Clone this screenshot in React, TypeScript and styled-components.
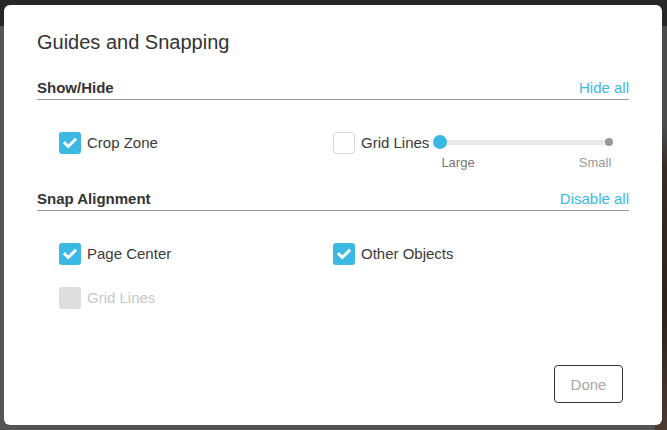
import styled, { createGlobalStyle } from "styled-components";

const GlobalStyle = createGlobalStyle`
  html, body {
    margin: 0;
    padding: 0;
    width: 100%;
    height: 100%;
    overflow: hidden;
    font-family: "Liberation Sans", Arial, sans-serif;
  }
`;

const ACCENT = "#3cb9e2";

const Page = styled.div`
  display: flex;
  flex-direction: column;
  width: 100vw;
  height: 100vh;
  background: #4f4f4f;
`;

const TopBar = styled.div`
  height: 26px;
  background: #262626;
`;

const Workspace = styled.div`
  flex: 1;
  display: flex;
`;

const Panel = styled.div`
  flex: 1;
  background: #545454;
`;

const Canvas = styled.div`
  width: 12px;
  background: linear-gradient(180deg, #4b4b4b 0%, #4b4b4b 25%, #3a2b24 35%, #2e201b 70%, #4a3a30 100%);
`;

const Overlay = styled.div`
  position: fixed;
  inset: 0;
  padding: 5px 5px 5px 4px;
  display: flex;
  align-items: flex-start;
`;

const Dialog = styled.div`
  box-sizing: border-box;
  width: 658px;
  height: 420px;
  padding: 25px 33px 22px;
  background: #fff;
  border-radius: 6px;
  display: flex;
  flex-direction: column;
  color: #333;
`;

const Title = styled.h2`
  margin: 0;
  font-size: 20px;
  line-height: 24px;
  font-weight: 400;
  color: #333;
`;

const SectionHeader = styled.div<{ $top: number }>`
  display: flex;
  justify-content: space-between;
  align-items: center;
  margin-top: ${(p) => p.$top}px;
  padding-bottom: 2px;
  border-bottom: 1px solid #999;
  line-height: 18px;
`;

const SectionTitle = styled.span`
  font-size: 15px;
  font-weight: 700;
  color: #333;
`;

const LinkButton = styled.button`
  border: 0;
  padding: 0;
  background: none;
  font: inherit;
  font-size: 15px;
  color: ${ACCENT};
  cursor: pointer;
`;

const OptionGrid = styled.div`
  display: grid;
  grid-template-columns: 274px 1fr;
  row-gap: 22px;
  margin-top: 32px;
  padding-left: 22px;
  align-items: start;
`;

const Option = styled.label<{ $disabled?: boolean }>`
  display: flex;
  align-items: flex-start;
  font-size: 15px;
  line-height: 22px;
  color: ${(p) => (p.$disabled ? "#c8c8c8" : "#3a3a3a")};
`;

const Box = styled.span<{ $checked?: boolean; $disabled?: boolean }>`
  box-sizing: border-box;
  flex: none;
  width: 22px;
  height: 22px;
  margin-right: 6px;
  border-radius: 3px;
  display: flex;
  align-items: center;
  justify-content: center;
  background: ${(p) => (p.$disabled ? "#dedede" : p.$checked ? ACCENT : "#fff")};
  border: ${(p) => (p.$checked || p.$disabled ? "none" : "1px solid #d9d9d9")};
`;

const Slider = styled.div`
  margin: 3px 0 0 4px;
  width: 180px;
  display: flex;
  flex-direction: column;
`;

const Track = styled.div`
  position: relative;
  height: 14px;
  &::before {
    content: "";
    position: absolute;
    left: 7px;
    right: 4px;
    top: 5px;
    height: 5px;
    border-radius: 3px;
    background: #e8e8e8;
  }
`;

const Thumb = styled.span`
  position: absolute;
  left: 0;
  top: 0;
  width: 14px;
  height: 14px;
  border-radius: 50%;
  background: ${ACCENT};
`;

const EndStop = styled.span`
  position: absolute;
  right: 0;
  top: 3px;
  width: 8px;
  height: 8px;
  border-radius: 50%;
  background: #999;
`;

const SliderLabels = styled.div`
  display: flex;
  justify-content: space-between;
  margin-top: 6px;
  padding: 0 2px 0 8px;
  font-size: 13px;
  line-height: 16px;
`;

const SliderLabel = styled.span<{ $muted?: boolean }>`
  color: ${(p) => (p.$muted ? "#9a9a9a" : "#777")};
`;

const Footer = styled.div`
  margin-top: auto;
  display: flex;
  justify-content: flex-end;
  padding-right: 6px;
`;

const DoneButton = styled.button`
  box-sizing: border-box;
  width: 69px;
  height: 38px;
  border: 1px solid #333;
  border-radius: 4px;
  background: #fff;
  font-family: inherit;
  font-size: 15px;
  color: #a8a8a8;
  cursor: pointer;
`;

const Check = () => (
  <svg width="22" height="22" viewBox="0 0 22 22">
    <path
      d="M6 11.2l3.3 3.3L16 7.8"
      fill="none"
      stroke="#fff"
      strokeWidth="3"
      strokeLinecap="square"
      strokeLinejoin="miter"
    />
  </svg>
);

type CheckProps = { label: string; checked?: boolean; disabled?: boolean; children?: React.ReactNode };

const CheckOption = ({ label, checked, disabled, children }: CheckProps) => (
  <Option $disabled={disabled}>
    <Box $checked={checked} $disabled={disabled}>
      {checked && <Check />}
    </Box>
    {label}
    {children}
  </Option>
);

const App = () => {
  return (
    <>
      <GlobalStyle />
      <Page>
        <TopBar />
        <Workspace>
          <Panel />
          <Canvas />
        </Workspace>
      </Page>
      <Overlay>
        <Dialog>
          <Title>Guides and Snapping</Title>

          <SectionHeader $top={25}>
            <SectionTitle>Show/Hide</SectionTitle>
            <LinkButton>Hide all</LinkButton>
          </SectionHeader>
          <OptionGrid>
            <CheckOption label="Crop Zone" checked />
            <CheckOption label="Grid Lines">
              <Slider>
                <Track>
                  <Thumb />
                  <EndStop />
                </Track>
                <SliderLabels>
                  <SliderLabel>Large</SliderLabel>
                  <SliderLabel $muted>Small</SliderLabel>
                </SliderLabels>
              </Slider>
            </CheckOption>
          </OptionGrid>

          <SectionHeader $top={19}>
            <SectionTitle>Snap Alignment</SectionTitle>
            <LinkButton>Disable all</LinkButton>
          </SectionHeader>
          <OptionGrid>
            <CheckOption label="Page Center" checked />
            <CheckOption label="Other Objects" checked />
            <CheckOption label="Grid Lines" disabled />
          </OptionGrid>

          <Footer>
            <DoneButton>Done</DoneButton>
          </Footer>
        </Dialog>
      </Overlay>
    </>
  );
};

export default App;
